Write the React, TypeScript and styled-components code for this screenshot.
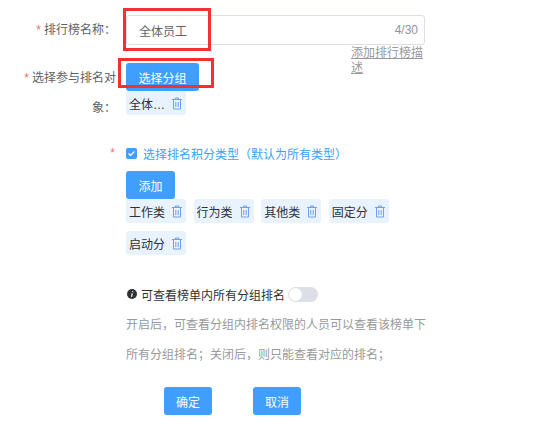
import styled, { createGlobalStyle } from 'styled-components';

const scoreTags = [['工作类', '行为类', '其他类', '固定分'], ['启动分']];

const GlobalStyle = createGlobalStyle`
  html, body {
    margin: 0;
    background: #fff;
    font-family: 'Liberation Sans', 'Noto Sans CJK SC', sans-serif;
    font-size: 12px;
    overflow: hidden;
  }
`;

const Page = styled.div`
  position: relative;
  width: 542px;
  height: 436px;
  padding-top: 15px;
  box-sizing: border-box;
`;

const Row = styled.div<{ $top?: number }>`
  display: flex;
  margin-top: ${(p) => p.$top ?? 0}px;
`;

const Label = styled.label`
  width: 116px;
  margin-right: 10px;
  flex-shrink: 0;
  text-align: right;
  line-height: 30px;
  color: #606266;
  padding-left: 20px;
  box-sizing: border-box;
`;

const Star = styled.span`
  color: #f56c6c;
  margin-right: 3px;
`;

const Field = styled.div`
  position: relative;
  flex: 1;
  min-width: 0;
`;

const InputBox = styled.div`
  display: flex;
  align-items: center;
  justify-content: space-between;
  width: 299px;
  height: 30px;
  padding: 0 6px 0 12px;
  box-sizing: border-box;
  border: 1px solid #dcdfe6;
  border-radius: 3px;
  color: #606266;
`;

const Counter = styled.span`
  color: #909399;
`;

const DescLink = styled.a`
  position: absolute;
  left: 225px;
  top: 31px;
  width: 74px;
  color: #999;
  line-height: 14.5px;
  text-decoration: underline;
`;

const Button = styled.button<{ $width: number }>`
  display: block;
  width: ${(p) => p.$width}px;
  height: 28px;
  padding: 0;
  border: none;
  border-radius: 3px;
  background: #409eff;
  color: #fff;
  font: inherit;
`;

const AddButton = styled(Button)`
  margin-top: 3px;
`;

const Tag = styled.span`
  display: inline-flex;
  align-items: center;
  justify-content: space-between;
  width: 60px;
  height: 24px;
  padding: 0 3px;
  box-sizing: border-box;
  border-radius: 3px;
  background: #e8f3ff;
  color: #303133;
`;

const TagText = styled.span`
  width: 40px;
  overflow: hidden;
  white-space: nowrap;
  text-overflow: ellipsis;
`;

const TagRows = styled.div`
  display: flex;
  flex-direction: column;
  gap: 8px;
`;

const TagRow = styled.div`
  display: flex;
  gap: 7.6px;
`;

const CheckLine = styled.div`
  display: flex;
  align-items: center;
  height: 30px;
  color: #409eff;
  gap: 6px;
`;

const CheckBox = styled.span`
  display: flex;
  align-items: center;
  justify-content: center;
  width: 11px;
  height: 11px;
  border-radius: 2px;
  background: #409eff;
`;

const SideStar = styled.div`
  width: 116px;
  margin-right: 10px;
  flex-shrink: 0;
  padding-right: 1px;
  box-sizing: border-box;
  text-align: right;
  line-height: 30px;
  color: #f56c6c;
`;

const InfoLine = styled.div`
  display: flex;
  align-items: center;
  height: 16px;
  margin-top: 31px;
  color: #303133;
  padding-left: 1px;
`;

const InfoDot = styled.svg`
  margin-right: 4px;
`;

const Toggle = styled.span`
  position: relative;
  width: 30px;
  height: 15px;
  margin-left: 3px;
  border-radius: 8px;
  background: #dcdfe6;
`;

const Knob = styled.span`
  position: absolute;
  left: 1px;
  top: 1px;
  width: 13px;
  height: 13px;
  border-radius: 50%;
  background: #fff;
`;

const Hint = styled.p`
  width: 302px;
  margin: 8px 0 0;
  line-height: 30px;
  color: #999;
`;

const Actions = styled.div`
  display: flex;
  gap: 41px;
  margin: 17px 0 0 164px;
`;

const RedBox = styled.div<{ $left: number; $top: number; $w: number; $h: number }>`
  position: absolute;
  left: ${(p) => p.$left}px;
  top: ${(p) => p.$top}px;
  width: ${(p) => p.$w}px;
  height: ${(p) => p.$h}px;
  box-sizing: border-box;
  border: 3px solid #f5302e;
`;

const TrashSvg = styled.svg`
  flex-shrink: 0;
`;

const TrashIcon = () => (
  <TrashSvg width="12" height="13" viewBox="0 0 12 13" fill="none" stroke="#6f9ff0" strokeWidth="1">
    <path d="M1 2.5h10M4.5 2.5v-1.5h3v1.5M2.5 2.5v9.5h7v-9.5M4.8 5v5M7.2 5v5" />
  </TrashSvg>
);

export default function App() {
  return (
    <Page>
      <GlobalStyle />
      <Row>
        <Label>
          <Star>*</Star>排行榜名称：
        </Label>
        <Field>
          <InputBox>
            全体员工
            <Counter>4/30</Counter>
          </InputBox>
          <DescLink>添加排行榜描述</DescLink>
        </Field>
      </Row>

      <Row $top={18}>
        <Label>
          <Star>*</Star>选择参与排名对象：
        </Label>
        <Field>
          <Button $width={73}>选择分组</Button>
          <Tag>
            <TagText>全体…</TagText>
            <TrashIcon />
          </Tag>
        </Field>
      </Row>

      <Row $top={15}>
        <SideStar>*</SideStar>
        <Field>
          <CheckLine>
            <CheckBox>
              <svg width="9" height="9" viewBox="0 0 9 9" fill="none" stroke="#fff" strokeWidth="1.2">
                <path d="M1.5 4.5l2 2 4-4" />
              </svg>
            </CheckBox>
            选择排名积分类型（默认为所有类型）
          </CheckLine>
          <AddButton $width={49}>添加</AddButton>
          <TagRows>
            {scoreTags.map((row) => (
              <TagRow key={row[0]}>
                {row.map((tag) => (
                  <Tag key={tag}>
                    <TagText>{tag}</TagText>
                    <TrashIcon />
                  </Tag>
                ))}
              </TagRow>
            ))}
          </TagRows>
          <InfoLine>
            <InfoDot width="10" height="10" viewBox="0 0 10 10">
              <circle cx="5" cy="5" r="5" fill="#303133" />
              <path d="M5.6 2.2v1M5.2 4.3l-.6 3.5" stroke="#fff" strokeWidth="1.2" />
            </InfoDot>
            可查看榜单内所有分组排名
            <Toggle>
              <Knob />
            </Toggle>
          </InfoLine>
          <Hint>开启后，可查看分组内排名权限的人员可以查看该榜单下所有分组排名；关闭后，则只能查看对应的排名；</Hint>
        </Field>
      </Row>

      <Actions>
        <Button $width={48}>确定</Button>
        <Button $width={48}>取消</Button>
      </Actions>

      <RedBox $left={123} $top={8} $w={88} $h={43} />
      <RedBox $left={118} $top={58} $w={96} $h={30} />
    </Page>
  );
}
